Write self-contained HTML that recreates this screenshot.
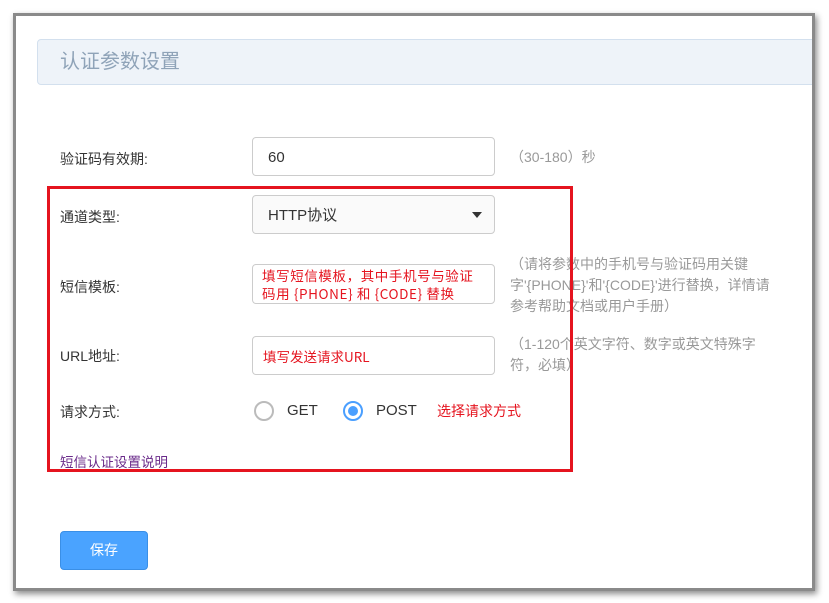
<!DOCTYPE html>
<html><head><meta charset="utf-8"><style>
*{margin:0;padding:0;box-sizing:border-box}
body{width:829px;height:603px;background:#fff;position:relative;overflow:hidden;font-family:"Liberation Sans","Noto Sans CJK SC",sans-serif}
.frame{position:absolute;left:13px;top:13px;width:802px;height:578px;border:3px solid #8a8a8a;box-shadow:2px 3px 6px rgba(0,0,0,.45);background:#fff;overflow:hidden}
.hdr{position:absolute;left:21px;top:23px;width:820px;height:46px;background:#eef3f9;border:1px solid #d3e0ee;border-radius:4px;color:#8fa3b8;font-size:20px;line-height:44px;padding-left:22px}
.lab{position:absolute;left:44px;font-size:14px;color:#333}
.inp{position:absolute;left:236px;width:243px;height:39px;border:1px solid #ccc;border-radius:4px;font-size:15px;color:#333;padding-left:15px;line-height:39px;background:#fff}
.hint{position:absolute;left:494px;font-size:14px;color:#999;line-height:21px;width:272px}
.red{color:#e5141f;font-family:"Noto Sans CJK SC",sans-serif;font-size:13px}
.box{position:absolute;left:31px;top:170px;width:526px;height:286px;border:3px solid #e5141f}
.radio{position:absolute;top:385px;width:20px;height:20px;border-radius:50%;border:2px solid #bbb;background:#fff}
</style></head><body>
<div class="frame">
<div class="hdr">认证参数设置</div>
<div class="lab" style="top:133px">验证码有效期:</div>
<div class="inp" style="top:121px">60</div>
<div class="hint" style="top:131px">（30-180）秒</div>
<div class="lab" style="top:191px">通道类型:</div>
<div class="inp" style="top:179px;background:#fafafa">HTTP协议<span style="position:absolute;right:12px;top:16px;width:0;height:0;border-left:5px solid transparent;border-right:5px solid transparent;border-top:6px solid #333"></span></div>
<div class="lab" style="top:261px">短信模板:</div>
<div class="inp red" style="top:248px;height:40px;line-height:18px;padding:1px 14px 0 9px;border-color:#ccc;font-size:13.5px;letter-spacing:0.6px">填写短信模板，其中手机号与验证码用 {PHONE} 和 {CODE} 替换</div>
<div class="hint" style="top:238px">（请将参数中的手机号与验证码用关键字'{PHONE}'和'{CODE}'进行替换，详情请参考帮助文档或用户手册）</div>
<div class="lab" style="top:330px">URL地址:</div>
<div class="inp red" style="top:320px;padding-left:10px;font-size:13.5px">填写发送请求URL</div>
<div class="hint" style="top:318px">（1-120个英文字符、数字或英文特殊字符，必填）</div>
<div class="lab" style="top:386px">请求方式:</div>
<div class="radio" style="left:238px"></div>
<div class="lab" style="left:271px;top:386px;font-size:15px">GET</div>
<div class="radio" style="left:327px;border-color:#4a9fff"><div style="position:absolute;left:3px;top:3px;width:10px;height:10px;border-radius:50%;background:#4a9fff"></div></div>
<div class="lab" style="left:360px;top:386px;font-size:15px">POST</div>
<div class="red" style="position:absolute;left:421px;top:385px;font-size:14px">选择请求方式</div>
<div style="position:absolute;left:44px;top:435px;font-size:13.5px;color:#6a2a8a">短信认证设置说明</div>
<div class="box"></div>
<div style="position:absolute;left:44px;top:515px;width:88px;height:39px;background:#4aa3ff;border:1px solid #3a8fe6;border-radius:4px;color:#fff;font-size:14px;text-align:center;line-height:37px">保存</div>
</div>
</body></html>
